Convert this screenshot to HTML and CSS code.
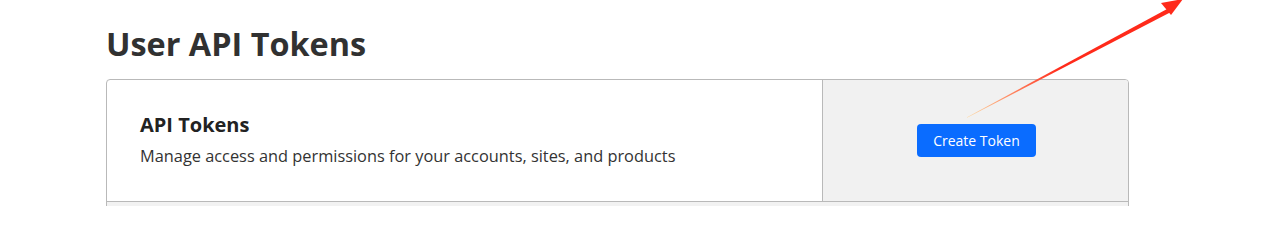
FILE: index.html
```html
<!DOCTYPE html>
<html>
<head>
<meta charset="utf-8">
<link rel="stylesheet" href="styles.css">
</head>
<body>
<main class="page">
  <h1 class="title">User API Tokens</h1>
  <section class="card">
    <div class="row">
      <div class="info">
        <h2 class="info-title">API Tokens</h2>
        <p class="info-desc">Manage access and permissions for your accounts, sites, and products</p>
      </div>
      <div class="action">
        <button class="btn">Create Token</button>
      </div>
    </div>
    <div class="row-next"></div>
  </section>
</main>
<svg class="annot" width="1268" height="206" viewBox="0 0 1268 206">
  <defs>
    <linearGradient id="g" x1="967" y1="117" x2="1060" y2="66" gradientUnits="userSpaceOnUse">
      <stop offset="0" stop-color="#ffd9a0"/>
      <stop offset="1" stop-color="#ff2a1a"/>
    </linearGradient>
  </defs>
  <polygon points="967,117.3 1168,8.5 1170,12.5 967,117.7" fill="url(#g)"/>
  <polygon points="1183,-1 1161,3 1166,9 1171,15" fill="#ff2a1a"/>
</svg>
</body>
</html>
```
FILE: styles.css
```css
html, body {
  margin: 0;
  padding: 0;
  background: #fff;
  height: 206px;
  overflow: hidden;
}
body {
  font-family: "Open Sans", "Noto Sans", sans-serif;
  color: #313131;
  width: 1268px;
  position: relative;
}
.page {
  height: 206px;
  overflow: hidden;
  padding: 0 139px 0 106px;
}
.title {
  margin: 0;
  padding-top: 22px;
  height: 79px;
  box-sizing: border-box;
  font-size: 32.4px;
  line-height: 42px;
  font-weight: 700;
  color: #313131;
}
.card {
  width: 1023px;
  border: 1px solid #b9b9b9;
  border-radius: 4px;
  box-sizing: border-box;
  overflow: hidden;
}
.row {
  display: flex;
  height: 121px;
  border-bottom: 1px solid #b9b9b9;
}
.info {
  width: 716px;
  border-right: 1px solid #b9b9b9;
  padding: 31px 0 0 33px;
  box-sizing: border-box;
}
.info-title {
  margin: 0;
  font-size: 20px;
  line-height: 28px;
  font-weight: 700;
  color: #222;
}
.info-desc {
  margin: 6px 0 0;
  font-size: 16.35px;
  line-height: 22px;
  color: #333;
}
.action {
  flex: 1;
  background: #f1f1f1;
  display: flex;
  justify-content: center;
  align-items: center;
  padding-left: 2px;
}
.btn {
  width: 119px;
  height: 33px;
  border: none;
  border-radius: 4px;
  background: #0a6cff;
  color: #fff;
  font-family: "Open Sans", "Noto Sans", sans-serif;
  font-size: 14px;
  padding: 0;
}
.row-next {
  height: 40px;
  background: #f2f2f2;
}
.annot {
  position: absolute;
  left: 0;
  top: 0;
  pointer-events: none;
}
```
